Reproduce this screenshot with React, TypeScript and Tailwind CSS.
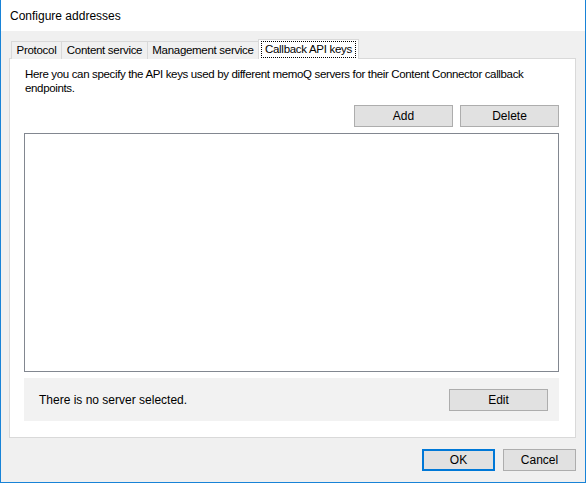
export default function App() {
  const tabs = [
    { label: "Protocol", w: "w-[51px]" },
    { label: "Content service", w: "w-[87px]" },
    { label: "Management service", w: "w-[112px]" },
  ];

  return (
    <div className="w-[586px] h-[483px] flex flex-col bg-[#f0f0f0] border-x border-b border-[#1883d7] text-[12px] text-black font-['Liberation_Sans',Arial,sans-serif] select-none">
      {/* Title bar */}
      <div className="h-[31px] shrink-0 bg-white pl-[9px] flex items-center text-[12px]">
        Configure addresses
      </div>

      <div className="flex-1 flex flex-col pl-[8px] pr-[9px] pt-[8px]">
        {/* Tabs */}
        <div className="h-[20px] flex items-end pl-[2px] relative z-10 -mb-px text-[11.5px] tracking-[-0.3px]">
          {tabs.map((t) => (
            <div
              key={t.label}
              className={`${t.w} h-[18px] -ml-px first:ml-0 flex items-center justify-center border border-b-0 border-[#d9d9d9] bg-[#f0f0f0] whitespace-nowrap`}
            >
              {t.label}
            </div>
          ))}
          <div className="w-[101px] h-[20px] -ml-px flex items-start justify-center pt-[1px] border border-b-0 border-[#d9d9d9] bg-white">
            <span className="w-[95px] h-[17px] flex items-center justify-center border border-dotted border-black whitespace-nowrap">
              Callback API keys
            </span>
          </div>
        </div>

        {/* Tab panel */}
        <div className="w-[567px] h-[380px] bg-white border border-[#d9d9d9] pl-[14px] pr-[16px] flex flex-col">
          <p className="mt-[8px] h-[28px] leading-[14px] pl-px text-[11.5px] tracking-[-0.35px] whitespace-nowrap">
            Here you can specify the API keys used by different memoQ servers for their Content Connector callback
            <br />
            endpoints.
          </p>

          <div className="mt-[10px] flex justify-end gap-[7px]">
            <button className="w-[99px] h-[22px] bg-[#e1e1e1] border border-[#adadad] leading-none">Add</button>
            <button className="w-[99px] h-[22px] bg-[#e1e1e1] border border-[#adadad] leading-none">Delete</button>
          </div>

          <div className="mt-[6px] h-[239px] border border-[#828790] bg-white"></div>

          <div className="mt-[6px] h-[43px] bg-[#f2f2f2] flex items-center justify-between pl-[15px] pr-[11px]">
            <span>There is no server selected.</span>
            <button className="w-[99px] h-[22px] bg-[#e1e1e1] border border-[#adadad] leading-none">Edit</button>
          </div>
        </div>

        {/* Dialog buttons */}
        <div className="mt-[11px] flex justify-end gap-[8px]">
          <button className="w-[73px] h-[22px] bg-[#e1e1e1] border-2 border-[#0078d7] leading-none">OK</button>
          <button className="w-[73px] h-[22px] bg-[#e1e1e1] border border-[#adadad] leading-none">Cancel</button>
        </div>
      </div>
    </div>
  );
}
